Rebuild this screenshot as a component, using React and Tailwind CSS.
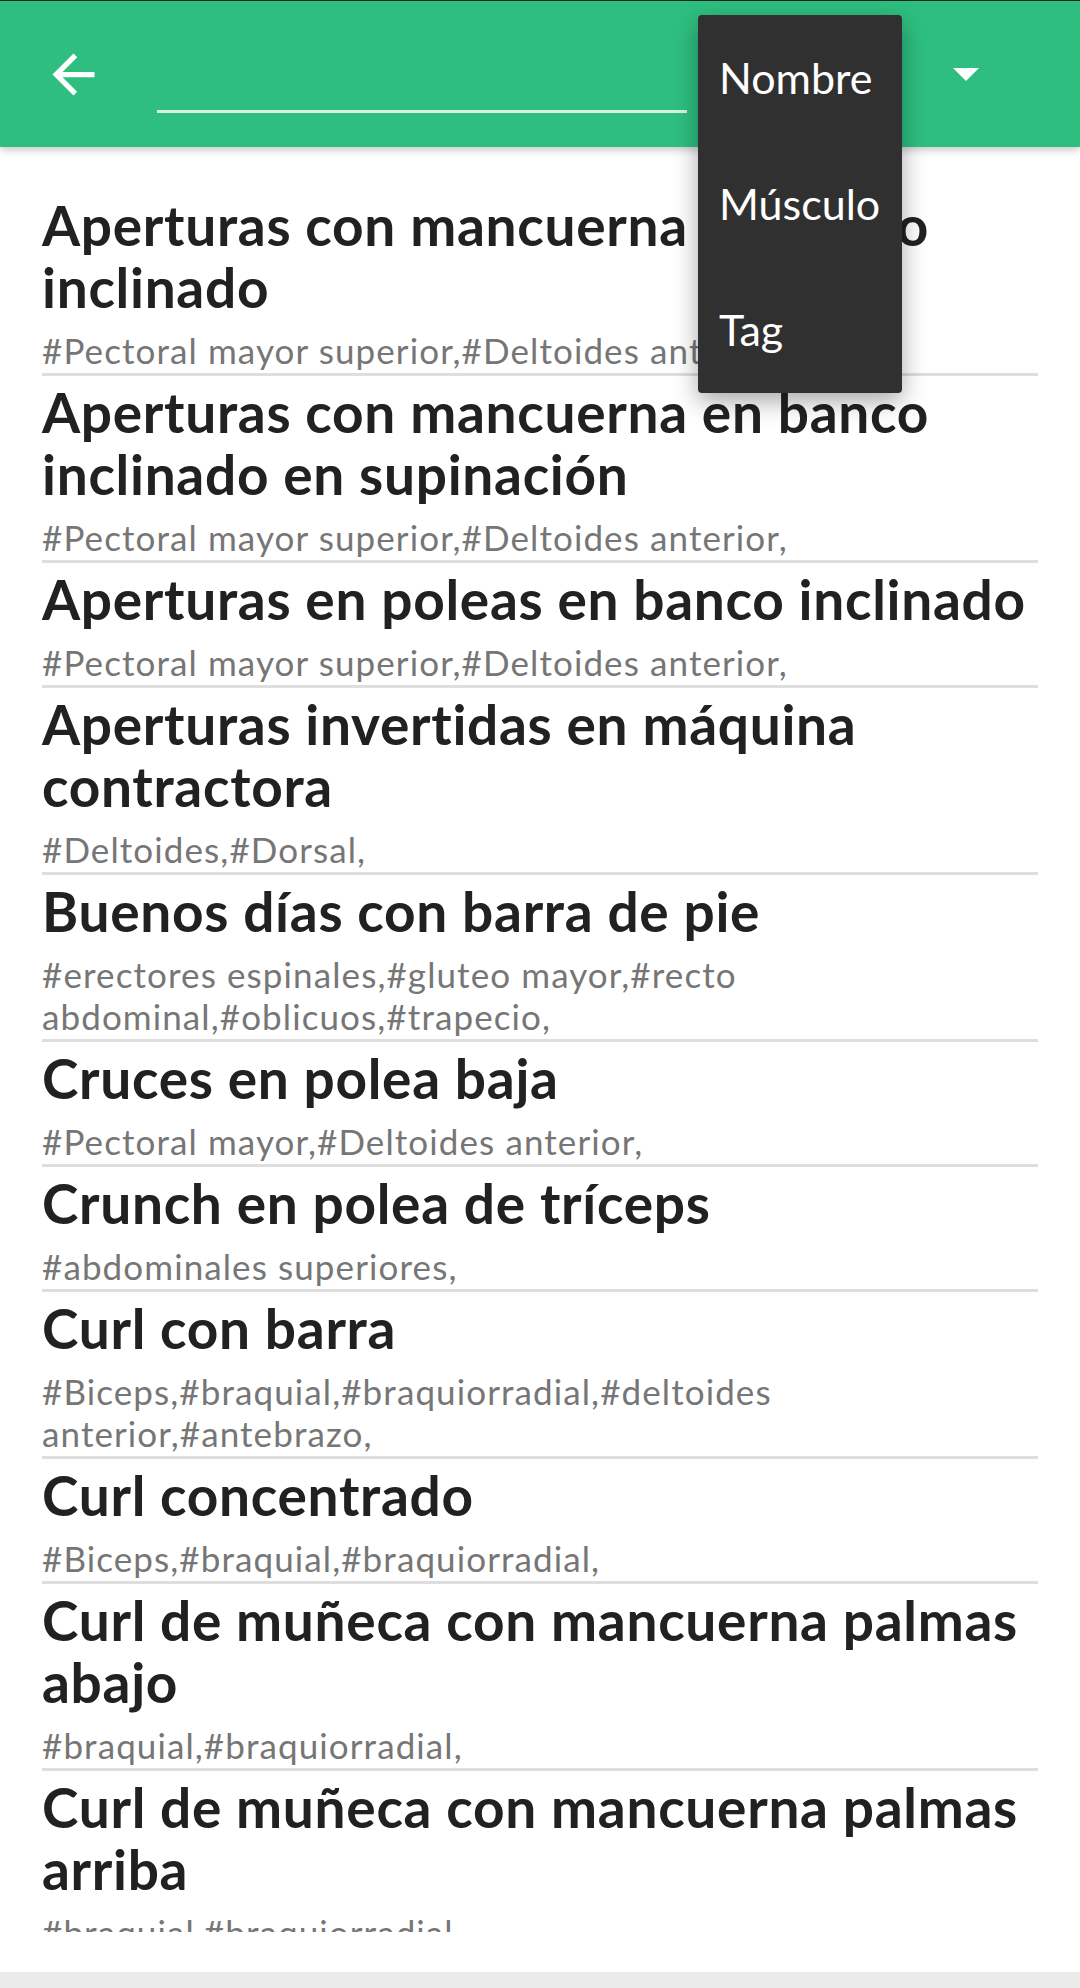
import React from "react";

const items = [
  { t: ["Aperturas con mancuerna en banco", "inclinado"], g: ["#Pectoral mayor superior,#Deltoides anterior,"] },
  { t: ["Aperturas con mancuerna en banco", "inclinado en supinación"], g: ["#Pectoral mayor superior,#Deltoides anterior,"] },
  { t: ["Aperturas en poleas en banco inclinado"], g: ["#Pectoral mayor superior,#Deltoides anterior,"] },
  { t: ["Aperturas invertidas en máquina", "contractora"], g: ["#Deltoides,#Dorsal,"] },
  { t: ["Buenos días con barra de pie"], g: ["#erectores espinales,#gluteo mayor,#recto", "abdominal,#oblicuos,#trapecio,"] },
  { t: ["Cruces en polea baja"], g: ["#Pectoral mayor,#Deltoides anterior,"] },
  { t: ["Crunch en polea de tríceps"], g: ["#abdominales superiores,"] },
  { t: ["Curl con barra"], g: ["#Biceps,#braquial,#braquiorradial,#deltoides", "anterior,#antebrazo,"] },
  { t: ["Curl concentrado"], g: ["#Biceps,#braquial,#braquiorradial,"] },
  { t: ["Curl de muñeca con mancuerna palmas", "abajo"], g: ["#braquial,#braquiorradial,"] },
  { t: ["Curl de muñeca con mancuerna palmas", "arriba"], g: ["#braquial,#braquiorradial,"] },
];

export default function App() {
  return (
    <div className="relative w-[1080px] h-[1988px] bg-white overflow-hidden font-['Lato',sans-serif]">
      {/* Header */}
      <div className="relative z-10 h-[147px] bg-[#2ebf80] border-t border-[#17261f] flex items-center shadow-[0_3px_8px_rgba(0,0,0,0.22)]">
        <div className="ml-[42px] w-[63px] h-[63px] flex items-center justify-center">
          <svg viewBox="0 0 24 24" width="63" height="63" fill="white">
            <path d="M20 11H7.83l5.59-5.59L12 4l-8 8 8 8 1.41-1.41L7.83 13H20v-2z" />
          </svg>
        </div>
        <div className="ml-[52px] w-[530px] h-[77px] border-b-[3px] border-[#d4f4e4]" />
        <div className="flex-1 flex justify-end pr-[101px]">
          <svg viewBox="0 0 26 13" width="26" height="13">
            <polygon points="0,0 26,0 13,13" fill="white" />
          </svg>
        </div>
      </div>

      {/* List */}
      <div className="h-[1785px] overflow-hidden pt-[42px] px-[42px]">
        {items.map((it, i) => (
          <div key={i} className="pt-[5px] pb-[2px] border-b-[3px] border-[#dedede]">
            <div className="text-[55px] leading-[62px] font-bold tracking-[0.7px] text-[#212121]">
              {it.t.map((l, j) => (
                <div key={j} className="whitespace-nowrap">{l}</div>
              ))}
            </div>
            <div className="mt-[11px] text-[35px] leading-[42px] tracking-[1.1px] text-[#767676]">
              {it.g.map((l, j) => (
                <div key={j} className="whitespace-nowrap">{l}</div>
              ))}
            </div>
          </div>
        ))}
      </div>
      <div className="h-[40px] bg-white" />
      <div className="h-[16px] bg-[#ebebeb]" />

      {/* Dropdown menu */}
      <div className="absolute z-20 left-[698px] top-[15px] w-[204px] bg-[#303030] rounded-[4px] shadow-[0_8px_24px_rgba(0,0,0,0.35)] flex flex-col">
        {["Nombre", "Músculo", "Tag"].map((m) => (
          <div key={m} className="h-[126px] flex items-center pl-[21px] text-[43px] text-white">
            {m}
          </div>
        ))}
      </div>
    </div>
  );
}
